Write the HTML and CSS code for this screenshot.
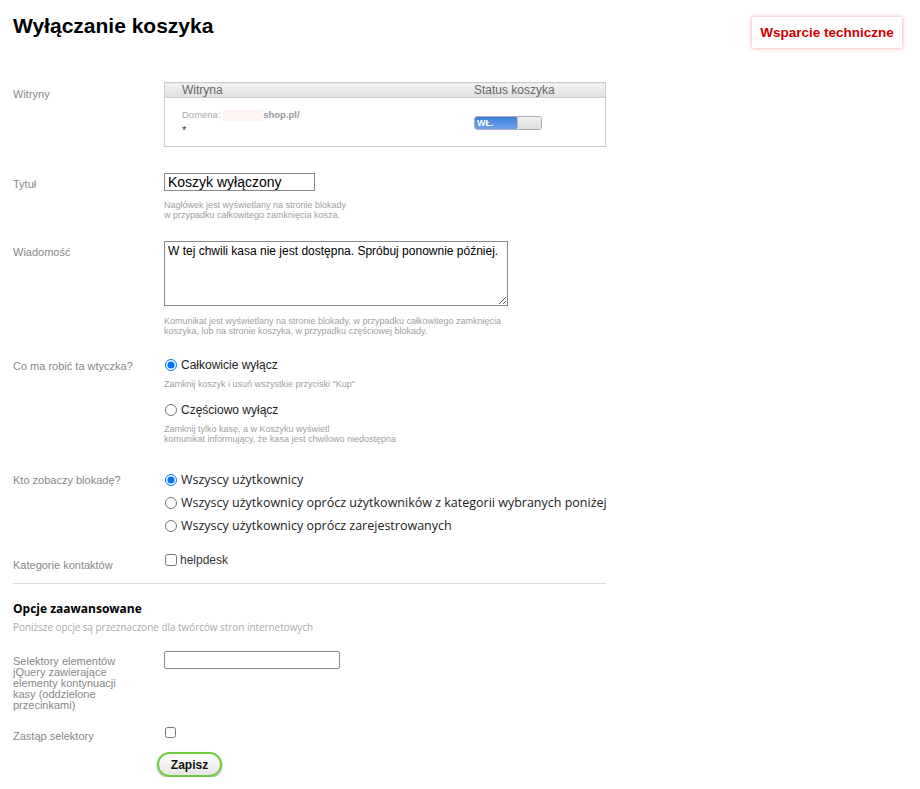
FILE: index.html
```html
<!DOCTYPE html>
<html lang="pl">
<head>
  <meta charset="UTF-8">
  <title>Wyłączanie koszyka</title>
  <link rel="stylesheet" href="styles.css">
</head>
<body>

<div class="page">
  <div class="header">
    <h1>Wyłączanie koszyka</h1>
    <a class="support" href="#">Wsparcie techniczne</a>
  </div>

  <div class="row row-sites">
    <div class="label">Witryny</div>
    <div class="field">
      <table class="sites">
        <tr>
          <th class="col-site">Witryna</th>
          <th>Status koszyka</th>
        </tr>
        <tr>
          <td class="col-site">
            <div class="domain">Domena: <span class="blur"></span><b>shop.pl/</b></div>
            <div class="star">*</div>
          </td>
          <td>
            <div class="toggle"><span class="on">WŁ.</span><span class="knob"></span></div>
          </td>
        </tr>
      </table>
    </div>
  </div>

  <div class="row row-title">
    <div class="label">Tytuł</div>
    <div class="field">
      <input type="text" class="input-title" value="Koszyk wyłączony">
      <div class="hint">Nagłówek jest wyświetlany na stronie blokady<br>w przypadku całkowitego zamknięcia kosza.</div>
    </div>
  </div>

  <div class="row row-msg">
    <div class="label">Wiadomość</div>
    <div class="field">
      <textarea class="input-msg">W tej chwili kasa nie jest dostępna. Spróbuj ponownie później.</textarea>
      <div class="hint">Komunikat jest wyświetlany na stronie blokady, w przypadku całkowitego zamknięcia<br>koszyka, lub na stronie koszyka, w przypadku częściowej blokady.</div>
    </div>
  </div>

  <div class="row row-mode">
    <div class="label">Co ma robić ta wtyczka?</div>
    <div class="field">
      <label class="radio"><input type="radio" name="mode" checked> Całkowicie wyłącz</label>
      <div class="hint hint-radio">Zamknij koszyk i usuń wszystkie przyciski "Kup"</div>
      <label class="radio radio-second"><input type="radio" name="mode"> Częściowo wyłącz</label>
      <div class="hint hint-radio">Zamknij tylko kasę, a w Koszyku wyświetl<br>komunikat informujący, że kasa jest chwilowo niedostępna</div>
    </div>
  </div>

  <div class="row row-who">
    <div class="label">Kto zobaczy blokadę?</div>
    <div class="field who">
      <label class="radio-os"><input type="radio" name="who" checked>Wszyscy użytkownicy</label>
      <label class="radio-os"><input type="radio" name="who">Wszyscy użytkownicy oprócz użytkowników z kategorii wybranych poniżej</label>
      <label class="radio-os"><input type="radio" name="who">Wszyscy użytkownicy oprócz zarejestrowanych</label>
    </div>
  </div>

  <div class="row row-cat">
    <div class="label">Kategorie kontaktów</div>
    <div class="field">
      <label class="check"><input type="checkbox"> helpdesk</label>
    </div>
  </div>

  <hr>

  <h2>Opcje zaawansowane</h2>
  <div class="subtitle">Poniższe opcje są przeznaczone dla twórców stron internetowych</div>

  <div class="row row-sel">
    <div class="label label-narrow">Selektory elementów jQuery zawierające elementy kontynuacji kasy (oddzielone przecinkami)</div>
    <div class="field">
      <input type="text" class="input-sel">
    </div>
  </div>

  <div class="row row-replace">
    <div class="label">Zastąp selektory</div>
    <div class="field">
      <input type="checkbox" class="check-replace">
    </div>
  </div>

  <div class="actions">
    <button class="save">Zapisz</button>
  </div>
</div>

</body>
</html>
```

FILE: styles.css
```css
body {
  margin: 0;
  font-family: "Liberation Sans", Arial, sans-serif;
  background: #fff;
  color: #000;
}
.page {
  width: 593px;
  padding: 12px 0 0 13px;
}
.header {
  height: 70px;
}
h1 {
  margin: 0;
  font-size: 21px;
  font-weight: bold;
  line-height: 28px;
}
.support {
  position: absolute;
  left: 752px;
  top: 17px;
  width: 150px;
  height: 31px;
  line-height: 31px;
  text-align: center;
  color: #d40000;
  font-weight: bold;
  font-size: 13.5px;
  text-decoration: none;
  background: #fff;
  box-shadow: 0 0 4px rgba(220, 40, 40, 0.45);
}
.row {
  display: flex;
}
.label {
  width: 151px;
  flex-shrink: 0;
  font-size: 11px;
  color: #888;
}
.label-narrow {
  width: 120px;
  margin-right: 31px;
  line-height: 11px;
}
.field {
  flex: 1;
}
.hint {
  font-size: 9px;
  color: #a0a0a0;
  line-height: 10px;
}

/* witryny */
.row-sites .label {
  padding-top: 6px;
}
.sites {
  width: 442px;
  border: 1px solid #ccc;
  border-collapse: collapse;
}
.sites th {
  height: 14px;
  padding: 0;
  font-weight: normal;
  font-size: 12px;
  color: #666;
  text-align: left;
  background: linear-gradient(#f4f4f4, #dedede);
  border-bottom: 1px solid #d0d0d0;
}
.sites td {
  height: 48px;
  padding: 0;
  vertical-align: top;
}
.col-site {
  width: 292px;
  padding-left: 17px !important;
}
.domain {
  margin-top: 11px;
  font-size: 9.5px;
  color: #aaa;
}
.domain b {
  color: #999;
}
.blur {
  display: inline-block;
  width: 40px;
  height: 11px;
  vertical-align: middle;
  background: #fdf3f3;
}
.star {
  margin-top: 3px;
  font-size: 11px;
  color: #333;
}
.toggle {
  display: flex;
  width: 66px;
  height: 12px;
  margin-top: 18px;
  border: 1px solid #aab;
  border-radius: 3px;
  overflow: hidden;
}
.toggle .on {
  width: 40px;
  background: linear-gradient(#3c7ed6, #6fa3ea);
  color: #fff;
  font-size: 9px;
  font-weight: bold;
  line-height: 12px;
  padding-left: 2px;
}
.toggle .knob {
  flex: 1;
  background: linear-gradient(#f2f2f2, #dddddd);
  border-left: 1px solid #bbb;
  border-radius: 3px;
}

/* tytul */
.row-title {
  margin-top: 26px;
}
.row-title .label {
  padding-top: 5px;
}
.input-title {
  display: block;
  box-sizing: border-box;
  width: 151px;
  height: 18px;
  margin: 0 0 9px;
  padding: 0 3px;
  border: 1px solid #888;
  font-family: "Liberation Sans", Arial, sans-serif;
  font-size: 14px;
}

/* wiadomosc */
.row-msg {
  margin-top: 21px;
}
.row-msg .label {
  padding-top: 5px;
}
.input-msg {
  display: block;
  box-sizing: border-box;
  width: 344px;
  height: 65px;
  margin: 0 0 10px;
  padding: 2px 3px;
  border: 1px solid #888;
  resize: both;
  font-family: "Liberation Sans", Arial, sans-serif;
  font-size: 12px;
}

/* tryb */
.row-mode {
  margin-top: 21px;
}
.row-mode .label {
  padding-top: 3px;
}
.radio {
  display: flex;
  align-items: center;
  font-size: 12px;
  color: #222;
  height: 16px;
}
.radio input,
.radio-os input {
  width: 12px;
  height: 12px;
  margin: 0 4px 0 1px;
}
.hint-radio {
  margin: 6px 0 0;
}
.radio-second {
  margin-top: 13px;
}

/* kto */
.row-who {
  margin-top: 27px;
}
.row-who .label {
  padding-top: 3px;
}
.who {
  display: flex;
  flex-direction: column;
  gap: 6px;
}
.radio-os {
  display: flex;
  align-items: center;
  font-family: "Open Sans", sans-serif;
  font-size: 12.5px;
  color: #222;
  height: 17px;
  white-space: nowrap;
}

/* kategorie */
.row-cat {
  margin-top: 19px;
}
.row-cat .label {
  padding-top: 6px;
}
.check {
  display: flex;
  align-items: center;
  font-size: 12px;
  color: #333;
}
.check input {
  width: 12px;
  height: 12px;
  margin: 0 3px 0 1px;
}

hr {
  margin: 12px 0 0;
  border: 0;
  border-top: 1px solid #ddd;
}
h2 {
  margin: 16px 0 0;
  font-family: "Open Sans", sans-serif;
  font-size: 12px;
  font-weight: bold;
  line-height: 17px;
}
.subtitle {
  margin-top: 3px;
  font-family: "Open Sans", sans-serif;
  font-size: 9.9px;
  color: #aaa;
}

/* selektory */
.row-sel {
  margin-top: 17px;
}
.row-sel .label {
  padding-top: 5px;
}
.input-sel {
  display: block;
  box-sizing: border-box;
  width: 176px;
  height: 18px;
  margin: 0;
  border: 1px solid #888;
  border-radius: 2px;
}

.row-replace {
  margin-top: 13px;
}
.row-replace .label {
  padding-top: 6px;
}
.check-replace {
  width: 11px;
  height: 11px;
  margin: 0 0 0 1px;
}

.actions {
  margin: 10px 0 0 144px;
}
.save {
  width: 65px;
  height: 25px;
  border: 2px solid #6ccb3f;
  border-radius: 13px;
  background: linear-gradient(#ffffff, #e6e6e6);
  box-shadow: 0 1px 2px rgba(0, 0, 0, 0.4);
  font-family: "Liberation Sans", Arial, sans-serif;
  font-size: 12px;
  font-weight: bold;
  color: #111;
}
```
